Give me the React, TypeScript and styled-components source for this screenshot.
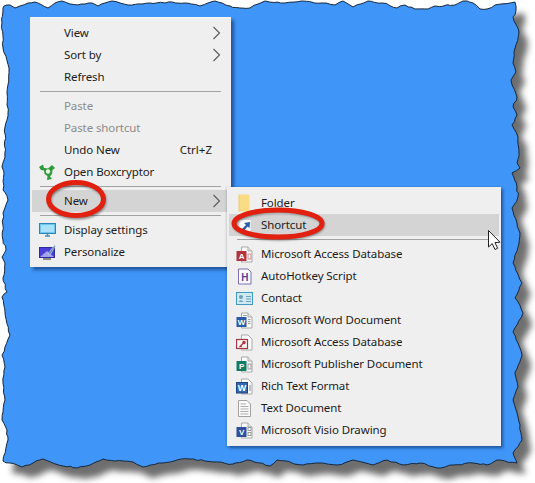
import React from 'react';
import styled, { createGlobalStyle } from 'styled-components';

const BLUE = '#3f95f8';
const MENU_BG = '#efefef';
const HOVER = '#d4d4d4';
const RED = '#e2200f';

const EDGE: [number, number][] = [
   [4, 6], [10, 5], [15, 8], [20, 6], [28, 3], [35, 2], [42, 5], [48, 8], [55, 3], [62, 1], [70, 4], [78, 5], [85, 4], [92, 3],
   [98, 6], [105, 3], [112, 1], [120, 3], [128, 5], [142, 4], [150, 3], [165, 3], [172, 2], [185, 3], [200, 6], [208, 3],
   [215, 1], [222, 3], [230, 6], [240, 8], [250, 8], [258, 4], [265, 1], [285, 3], [302, 1], [322, 3], [335, 5], [343, 1],
   [353, 7], [368, 1], [382, 3], [397, 8], [405, 5], [415, 9], [428, 9], [435, 6], [455, 5], [463, 1], [473, 3], [480, 9],
   [487, 9], [495, 5], [515, 2], [516, 10], [513, 17], [519, 32], [514, 52], [513, 63], [516, 72], [511, 80], [517, 97],
   [513, 107], [517, 115], [512, 125], [518, 137], [519, 153], [517, 163], [520, 168], [512, 173], [517, 187], [518, 197],
   [512, 208], [517, 223], [520, 233], [518, 247], [513, 263], [522, 283], [515, 298], [523, 313], [513, 332], [518, 343],
   [522, 355], [515, 372], [518, 387], [513, 400], [518, 417], [522, 440], [513, 453], [517, 463], [497, 460], [487, 465],
   [473, 463], [453, 465], [437, 468], [420, 463], [403, 465], [387, 460], [373, 465], [353, 460], [337, 465], [320, 463],
   [303, 465], [277, 460], [270, 466], [247, 460], [233, 464], [213, 462], [190, 459], [177, 460], [163, 463], [143, 467],
   [133, 462], [123, 461], [103, 459], [90, 465], [77, 468], [63, 466], [43, 459], [33, 463], [22, 467], [10, 463], [3, 461],
   [8, 440], [7, 430], [2, 420], [5, 400], [3, 383], [5, 367], [2, 355], [5, 347], [10, 335], [5, 312], [2, 297], [7, 292],
   [3, 278], [5, 263], [2, 257], [6, 250], [3, 240], [3, 213], [8, 200], [3, 190], [4, 173], [2, 167], [5, 157], [5, 127],
   [8, 113], [7, 93], [9, 68], [3, 48], [2, 23], [3, 8],
];

// adds the fine torn-paper wobble between the traced points
const roughen = (pts: [number, number][]) => {
   let seed = 7;
   const rnd = () => {
      seed = (seed * 16807) % 2147483647;
      return seed / 2147483647 - 0.5;
   };
   const out: string[] = [];
   pts.forEach(([x, y], i) => {
      const [nx, ny] = pts[(i + 1) % pts.length];
      const steps = Math.max(1, Math.round(Math.hypot(nx - x, ny - y) / 4));
      for (let s = 0; s < steps; s++) {
         const t = s / steps;
         const j = s === 0 ? 0 : 1.6;
         out.push(`${(x + (nx - x) * t + rnd() * j).toFixed(1)},${(y + (ny - y) * t + rnd() * j).toFixed(1)}`);
      }
   });
   return out.join(' ');
};

const TORN = roughen(EDGE);

const GlobalStyle = createGlobalStyle`
   html, body {
      margin: 0;
      background: #fff;
   }
`;

const Page = styled.div`
   position: relative;
   width: 535px;
   height: 483px;
   overflow: hidden;
   padding: 18px 0 0 30px;
   box-sizing: border-box;
   font-family: 'Noto Sans', 'Open Sans', sans-serif;
   font-size: 11.5px;
   color: #1c1c1c;
`;

const Backdrop = styled.svg`
   position: absolute;
   inset: 0;
`;

const Overlay = styled.svg`
   position: absolute;
   inset: 0;
   pointer-events: none;
`;

const Menu = styled.div`
   position: relative;
   width: 201px;
   padding: 4px 0;
   box-sizing: border-box;
   background: ${MENU_BG};
   border-top: 1px solid #f6f6f6;
   margin-top: -1px;
   box-shadow: 3px 3px 3px rgba(10, 40, 90, 0.55);
`;

const Flyout = styled(Menu)`
   position: absolute;
   left: 195px;
   top: -3px;
   width: 274px;
   padding: 5px 0;
   margin-top: 0;
   border-top: 0;
   box-shadow: 2px 2px 3px rgba(10, 40, 90, 0.6), -1px 0 2px rgba(0, 0, 0, 0.12);
`;

const Row = styled.div<{ $active?: boolean; $muted?: boolean }>`
   position: relative;
   display: grid;
   grid-template-columns: 32px 1fr auto;
   align-items: center;
   box-sizing: border-box;
   height: 22px;
   margin: 0 2px;
   background: ${(p) => (p.$active ? HOVER : 'transparent')};
   color: ${(p) => (p.$muted ? '#8b8b8b' : 'inherit')};
   letter-spacing: -0.1px;
   white-space: nowrap;
`;

const Label = styled.span`
   display: block;
   line-height: 21px;
   height: 22px;
`;

const IconSlot = styled.span`
   display: flex;
   justify-content: flex-end;
   padding-right: 8px;
   height: 17px;
   align-items: center;
   svg {
      display: block;
   }
`;

const Hint = styled(Label)`
   padding-right: 17px;
   letter-spacing: 0;
`;

const Arrow = styled.svg`
   margin-right: 8px;
   display: block;
`;

const Rule = styled.div`
   height: 1px;
   margin: 3px 10px;
   background: #a2a2a2;
`;

const Chevron = () => (
   <Arrow width="9" height="14" viewBox="0 0 9 14">
      <path d="M1.5 1 L7.5 7 L1.5 13" fill="none" stroke="#5a5a5a" strokeWidth="1.1" />
   </Arrow>
);

const Page16 = ({ children }: { children?: React.ReactNode }) => (
   <svg width="17" height="17" viewBox="0 0 17 17">
      <path d="M5.5 1 H12 L16 5 V16 H5.5 Z" fill="#fbfbfb" stroke="#a9a9a9" />
      <path d="M12 1 V5 H16" fill="#e6e6e6" stroke="#a9a9a9" />
      {children}
   </svg>
);

const Boxcryptor = () => (
   <svg width="18" height="18" viewBox="0 0 18 18">
      <path d="M1 4 L5 1.5 L6 5 L10 5.5 L14 2 L17 5 L14.5 7 L14 11 L12 13.5 L14 16 L9 17 L9.5 13 L6.5 11 L6 7.5 L3 7 Z" fill="#2f9a3a" />
      <circle cx="10" cy="8.5" r="2.2" fill="#e8f3e6" />
   </svg>
);

const Monitor = () => (
   <svg width="17" height="16" viewBox="0 0 17 16">
      <rect x="0.5" y="1.5" width="16" height="10" fill="#6cc6ee" stroke="#2a86b8" />
      <rect x="2" y="3" width="13" height="7" fill="#a9e2f7" />
      <path d="M6 14 H11 M8.5 12 V14" stroke="#4d8fb0" strokeWidth="1.4" />
   </svg>
);

const Personalize = () => (
   <svg width="17" height="16" viewBox="0 0 17 16">
      <rect x="0.5" y="3.5" width="15" height="10" fill="#4a3fd8" stroke="#2f2a9a" />
      <path d="M1 13 L8 7 L15 13 Z" fill="#a4a0f0" />
      <path d="M9 10 L15.5 1 L16.5 2 L11 11 Z" fill="#5c8fb5" stroke="#e8e8e8" strokeWidth="0.5" />
      <path d="M4 15 H12" stroke="#444" strokeWidth="1.2" />
   </svg>
);

const FolderIcon = () => (
   <svg width="17" height="18" viewBox="0 0 17 18">
      <path d="M3 0.5 H12 Q13.5 0.5 13.5 2 V17.5 H3 Z" fill="#f9dc84" />
      <path d="M3 0.5 V17.5" stroke="#eccb6a" />
   </svg>
);

const ShortcutIcon = () => (
   <svg width="17" height="17" viewBox="0 0 17 17">
      <rect x="3" y="2.5" width="12" height="12" fill="#fafafa" stroke="#d4d4d4" />
      <path d="M6 14 L6 12 L10 8 L8 6 L14 5 L13.5 11 L11.5 9.5 L8 14 Z" fill="#2a5fa6" />
   </svg>
);

const Badge = ({ bg, label, w = 10 }: { bg: string; label: string; w?: number }) => (
   <>
      <rect x="0.5" y="5" width={w} height="10" fill={bg} />
      <text x={0.5 + w / 2} y="12.8" fontSize="8" fontWeight="700" fill="#fff" textAnchor="middle" fontFamily="Liberation Sans, sans-serif">
         {label}
      </text>
   </>
);

const AccessIcon = () => (
   <Page16>
      <Badge bg="#b3333f" label="A" />
      <rect x="12" y="8" width="3" height="5" fill="none" stroke="#d88a90" />
   </Page16>
);

const AhkIcon = () => (
   <svg width="17" height="17" viewBox="0 0 17 17">
      <path d="M2.5 1 H12 L15 4 V16 H2.5 Z" fill="#fbfbff" stroke="#7c70b0" />
      <text x="8.7" y="13" fontSize="10" fontWeight="700" fill="#5b3f9a" textAnchor="middle" fontFamily="Liberation Sans, sans-serif">H</text>
   </svg>
);

const ContactIcon = () => (
   <svg width="17" height="15" viewBox="0 0 17 15">
      <rect x="0.5" y="1.5" width="16" height="12" fill="#cfe9f5" stroke="#3f9ac2" />
      <circle cx="5" cy="6" r="2" fill="#6d9fb8" />
      <path d="M2.5 11 Q5 7.5 7.5 11 Z" fill="#6d9fb8" />
      <path d="M10 5.5 H15 M10 8 H15 M10 10.5 H15" stroke="#6d9fb8" />
   </svg>
);

const WordIcon = () => (
   <Page16>
      <Badge bg="#2b5aa8" label="W" />
      <path d="M12 7.5 H14.5 M12 9.5 H14.5 M12 11.5 H14.5 M7 3.5 H11" stroke="#9a9a9a" />
   </Page16>
);

const AccessKeyIcon = () => (
   <svg width="17" height="17" viewBox="0 0 17 17">
      <path d="M5.5 1 H12 L16 5 V16 H5.5 Z" fill="#fbfbfb" stroke="#a9a9a9" />
      <rect x="0.5" y="5.5" width="11" height="9" fill="#fbf3f3" stroke="#a93540" strokeWidth="1.2" />
      <circle cx="8" cy="8.5" r="1.7" fill="#a93540" />
      <path d="M7 9.5 L3.5 13 M4.5 12 L5.7 13" stroke="#a93540" strokeWidth="1.2" />
   </svg>
);

const PublisherIcon = () => (
   <Page16>
      <Badge bg="#107c65" label="P" />
      <rect x="12" y="8" width="3" height="5" fill="none" stroke="#9a9a9a" />
   </Page16>
);

const RtfIcon = () => (
   <svg width="17" height="17" viewBox="0 0 17 17">
      <path d="M5.5 1 H12 L16 5 V16 H5.5 Z" fill="#fbfbfb" stroke="#a9a9a9" />
      <rect x="0.5" y="4.5" width="11" height="10.5" fill="#3566b0" stroke="#1f447f" />
      <text x="6" y="13" fontSize="9" fontWeight="700" fill="#fff" textAnchor="middle" fontFamily="Liberation Sans, sans-serif">W</text>
      <path d="M13 8 H15 M13 10 H15 M13 12 H15" stroke="#8c8c8c" />
   </svg>
);

const TextIcon = () => (
   <svg width="17" height="17" viewBox="0 0 17 17">
      <path d="M2.5 0.5 H11 L14.5 4 V16.5 H2.5 Z" fill="#fafafa" stroke="#a2a2a2" />
      <path d="M4.5 4 H10 M4.5 6.5 H12.5 M4.5 9 H12.5 M4.5 11.5 H12.5 M4.5 14 H12.5" stroke="#adadad" />
   </svg>
);

const VisioIcon = () => (
   <Page16>
      <Badge bg="#2d4f9e" label="V" />
      <rect x="12" y="5.5" width="3" height="3" fill="none" stroke="#9a9a9a" />
      <rect x="12" y="10.5" width="3" height="3" fill="none" stroke="#9a9a9a" />
   </Page16>
);

interface Entry {
   label: string;
   icon?: React.ReactNode;
   sub?: boolean;
   muted?: boolean;
   hint?: string;
}

const Item = ({ label, icon, sub, muted, hint }: Entry) => (
   <Row $muted={muted}>
      <IconSlot>{icon}</IconSlot>
      <Label>{label}</Label>
      {sub && <Chevron />}
      {hint && <Hint>{hint}</Hint>}
   </Row>
);

const documents: Entry[] = [
   { label: 'Microsoft Access Database', icon: <AccessIcon /> },
   { label: 'AutoHotkey Script', icon: <AhkIcon /> },
   { label: 'Contact', icon: <ContactIcon /> },
   { label: 'Microsoft Word Document', icon: <WordIcon /> },
   { label: 'Microsoft Access Database', icon: <AccessKeyIcon /> },
   { label: 'Microsoft Publisher Document', icon: <PublisherIcon /> },
   { label: 'Rich Text Format', icon: <RtfIcon /> },
   { label: 'Text Document', icon: <TextIcon /> },
   { label: 'Microsoft Visio Drawing', icon: <VisioIcon /> },
];

export default function App() {
   return (
      <Page>
         <GlobalStyle />
         <Backdrop width="535" height="483" viewBox="0 0 535 483">
            <defs>
               <filter id="drop" x="-5%" y="-5%" width="110%" height="110%">
                  <feGaussianBlur stdDeviation="3" />
               </filter>
            </defs>
            <polygon points={TORN} transform="translate(9 11)" fill="#4c4c4c" opacity="0.8" filter="url(#drop)" />
            <polygon points={TORN} fill={BLUE} stroke="#16283c" strokeWidth="1" strokeLinejoin="round" />
         </Backdrop>

         <Menu>
            <Item label="View" sub />
            <Item label="Sort by" sub />
            <Item label="Refresh" />
            <Rule />
            <Item label="Paste" muted />
            <Item label="Paste shortcut" muted />
            <Item label="Undo New" hint="Ctrl+Z" />
            <Item label="Open Boxcryptor" icon={<Boxcryptor />} />
            <Rule />
            <Row $active>
               <IconSlot />
               <Label>New</Label>
               <Chevron />
               <Flyout>
                  <Item label="Folder" icon={<FolderIcon />} />
                  <Row $active>
                     <IconSlot>
                        <ShortcutIcon />
                     </IconSlot>
                     <Label>Shortcut</Label>
                  </Row>
                  <Rule />
                  {documents.map((d, i) => (
                     <Item key={i} {...d} />
                  ))}
               </Flyout>
            </Row>
            <Rule />
            <Item label="Display settings" icon={<Monitor />} />
            <Item label="Personalize" icon={<Personalize />} />
         </Menu>

         <Overlay width="535" height="483" viewBox="0 0 535 483">
            <defs>
               <filter id="soft" x="-20%" y="-30%" width="140%" height="160%">
                  <feGaussianBlur stdDeviation="1.2" />
               </filter>
            </defs>
            <ellipse cx="77" cy="201" rx="27.5" ry="16.5" fill="none" stroke="#333" strokeWidth="4" opacity="0.55" filter="url(#soft)" />
            <ellipse cx="76" cy="199" rx="27.5" ry="16.5" fill="none" stroke={RED} strokeWidth="5" />
            <ellipse cx="279" cy="225" rx="44" ry="13.5" fill="none" stroke="#333" strokeWidth="4" opacity="0.55" filter="url(#soft)" />
            <ellipse cx="278" cy="223.5" rx="44" ry="13.5" fill="none" stroke={RED} strokeWidth="5" />
            <path
               d="M488.5 230.5 V247 L492.2 243.6 L495 249.5 L497.6 248.3 L495 242.6 L500 242.2 Z"
               fill="#fff"
               stroke="#222"
               strokeWidth="1"
               strokeLinejoin="round"
            />
         </Overlay>
      </Page>
   );
}
